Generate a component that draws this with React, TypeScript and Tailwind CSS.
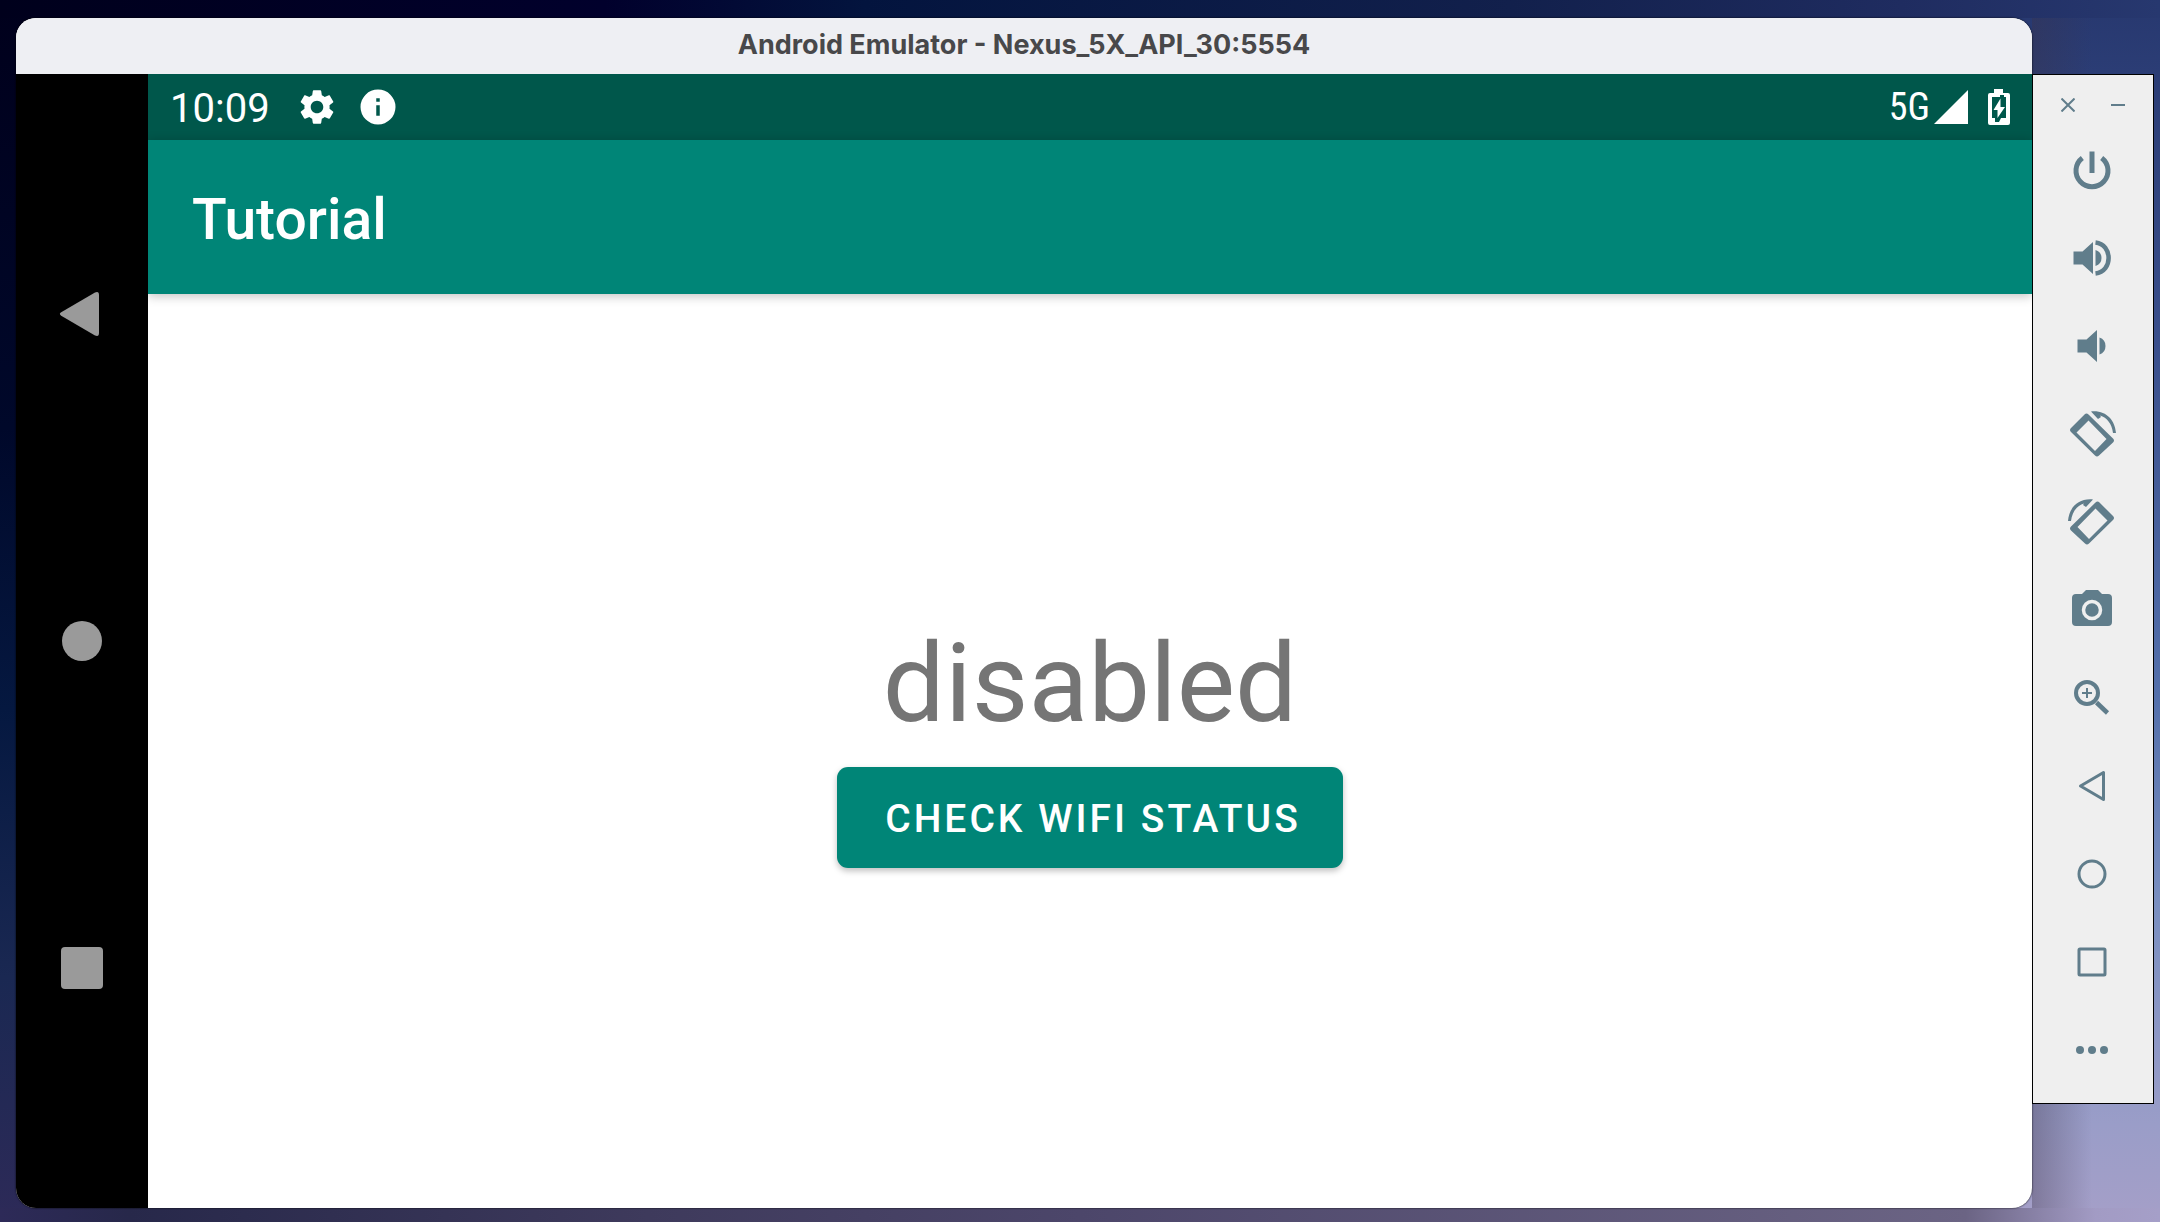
import type { ReactNode } from "react";

const navButton = "flex size-12 items-center justify-center text-[#9a9a9a]";
const toolButton = "flex h-[88px] w-full items-center justify-center pr-[2px]";

function Tool({ label, children }: { label: string; children: ReactNode }) {
  return (
    <button type="button" aria-label={label} className={toolButton}>
      <svg viewBox="0 0 48 48" className="size-12" fill="none" stroke="currentColor" aria-hidden="true">
        {children}
      </svg>
    </button>
  );
}

function RotatedPhone() {
  return (
    <>
      <path
        fill="currentColor"
        fillRule="evenodd"
        stroke="none"
        d="M3 18 16.500 4.500Q18.500 2.500 20.500 4.500L45 28.500Q47 30.500 45 32.500L31 45.500Q29 47.500 27 45.500L3 22Q1 20 3 18ZM8.500 22.500 27 41 38.500 29 20.500 10.500Z"
      />
      <path fill="currentColor" stroke="none" d="M23 1.500C38 0 47 10 48 23H45C44 14 39 7.500 32 5.500L33 7 30 9Z" />
    </>
  );
}

function NavigationBar() {
  return (
    <nav aria-label="Navigation" className="flex w-[132px] shrink-0 flex-col items-center justify-around bg-black py-[76px]">
      <button type="button" aria-label="Back" className={navButton}>
        <svg viewBox="0 0 48 48" className="size-12" fill="currentColor" aria-hidden="true">
          <path d="M3.200 22.300 37 2.500Q41 .800 41 5V43Q41 47.200 37 45.500L3.200 25.700Q.500 24 3.200 22.300Z" />
        </svg>
      </button>
      <button type="button" aria-label="Home" className={navButton}>
        <span className="size-10 rounded-full bg-[#9a9a9a]" />
      </button>
      <button type="button" aria-label="Overview" className={navButton}>
        <span className="size-[42px] rounded bg-[#9a9a9a]" />
      </button>
    </nav>
  );
}

function StatusBar() {
  return (
    <div className="flex h-[66px] items-center bg-[#00574b] pr-[22px] pl-[22px] text-white">
      <span className="pt-1 text-[40px] leading-none">10:09</span>
      <svg viewBox="0 0 24 24" className="ml-[26px] size-[42px]" fill="currentColor" aria-label="Settings">
        <path d="M19.140 12.940c.04-.3.06-.61.06-.94 0-.32-.02-.64-.07-.94l2.030-1.580c.18-.14.23-.41.12-.61l-1.920-3.320c-.12-.22-.37-.29-.59-.22l-2.390.96c-.5-.38-1.030-.7-1.620-.94l-.36-2.540c-.04-.24-.24-.41-.48-.41h-3.840c-.24 0-.43.17-.47.41l-.36 2.540c-.59.24-1.130.57-1.620.94l-2.390-.96c-.22-.08-.47 0-.59.22L2.740 8.870c-.12.21-.08.47.12.61l2.030 1.580c-.05.3-.09.63-.09.94s.02.64.07.94l-2.030 1.580c-.18.14-.23.41-.12.61l1.920 3.320c.12.22.37.29.59.22l2.390-.96c.5.38 1.030.7 1.620.94l.36 2.540c.05.24.24.41.48.41h3.840c.24 0 .44-.17.47-.41l.36-2.540c.59-.24 1.130-.56 1.620-.94l2.390.96c.22.08.47 0 .59-.22l1.920-3.320c.12-.22.07-.47-.12-.61l-2.010-1.580zM12 15.600c-1.980 0-3.600-1.620-3.600-3.600s1.620-3.600 3.600-3.600 3.600 1.620 3.600 3.600-1.620 3.600-3.600 3.600z" />
      </svg>
      <svg viewBox="0 0 24 24" className="ml-[19px] size-[42px]" fill="currentColor" aria-label="Information">
        <path d="M12 2a10 10 0 1 0 0 20 10 10 0 0 0 0-20Zm1 15h-2v-6h2v6Zm0-8h-2V7h2v2Z" />
      </svg>
      <span className="ml-auto font-['Roboto_Condensed',Roboto,sans-serif] text-[38px] leading-none">5G</span>
      <svg viewBox="0 0 34 34" className="ml-1 size-[34px]" fill="currentColor" aria-label="Signal">
        <path d="M34 0V34H0Z" />
      </svg>
      <svg viewBox="0 0 22 36" className="ml-5 h-9 w-[22px]" aria-label="Battery charging">
        <path fill="currentColor" d="M6 0h9v4h5q2 0 2 2v28q0 2-2 2H2q-2 0-2-2V6q0-2 2-2h4Z" />
        <path fill="#00574b" d="M4 8h8V6h4v2h2v21h-5l-2 4H7v-4H4Z" />
        <path fill="currentColor" d="M12.500 9.500v8.500H17L9.500 29v-8H5.500Z" />
      </svg>
    </div>
  );
}

function Toolbar() {
  return (
    <aside
      aria-label="Emulator controls"
      className="mt-14 flex w-[122px] shrink-0 flex-col self-start border border-black bg-[#efefef] pt-2 pb-[9px] text-[#607d8b]"
    >
      <div className="flex h-[43px] items-center justify-center gap-[22px]">
        <button type="button" aria-label="Close" className="flex size-7 items-center justify-center">
          <svg viewBox="0 0 14 14" className="size-[14px]" fill="none" stroke="currentColor" strokeWidth="2" aria-hidden="true">
            <path d="M.5.500 13.500 13.500M13.500.500.500 13.500" />
          </svg>
        </button>
        <button type="button" aria-label="Minimize" className="flex size-7 items-center justify-center">
          <span className="h-[2px] w-[14px] bg-[#607d8b]" />
        </button>
      </div>
      <Tool label="Power">
        <path strokeWidth="5" d="M24 5.500V27M14.300 12a16 16 0 1 0 19.400 0" />
      </Tool>
      <Tool label="Volume up">
        <path fill="currentColor" stroke="none" d="M5.500 17.500h9L25 8V40L14.500 30.500h-9ZM27.500 16q6 2 6 8t-6 8Z" />
        <path strokeWidth="4.500" d="M27.500 8.500C45 10.500 45 37.500 27.500 39.500" />
      </Tool>
      <Tool label="Volume down">
        <path fill="currentColor" stroke="none" d="M9.500 17.500h9L29 8V40L18.500 30.500h-9ZM31.500 15.500q6 2 6 8.500t-6 8.500Z" />
      </Tool>
      <Tool label="Rotate left">
        <RotatedPhone />
      </Tool>
      <Tool label="Rotate right">
        <g transform="translate(48 0) scale(-1 1)">
          <RotatedPhone />
        </g>
      </Tool>
      <Tool label="Take screenshot">
        <path fill="currentColor" stroke="none" d="M18 4H30L34 8H40Q44 8 44 12V36Q44 40 40 40H8Q4 40 4 36V12Q4 8 8 8H14Z" />
        <circle cx="24" cy="24" r="8.500" stroke="#efefef" strokeWidth="3.500" />
      </Tool>
      <Tool label="Zoom">
        <circle cx="19" cy="19" r="11" strokeWidth="4" />
        <path strokeWidth="2" d="M19 14V24M14 19H24" />
        <path strokeWidth="4.500" d="M28.500 28.500 39.500 39" />
      </Tool>
      <Tool label="Back">
        <path strokeWidth="3" strokeLinejoin="round" d="M12.500 24 35.500 10.500V37.500Z" />
      </Tool>
      <Tool label="Home">
        <circle cx="24" cy="24" r="13" strokeWidth="3" />
      </Tool>
      <Tool label="Overview">
        <rect x="11" y="11" width="26" height="26" rx="1" strokeWidth="3" />
      </Tool>
      <Tool label="More">
        <g fill="currentColor" stroke="none">
          <circle cx="12" cy="24" r="4" />
          <circle cx="24" cy="24" r="4" />
          <circle cx="36" cy="24" r="4" />
        </g>
      </Tool>
    </aside>
  );
}

export default function App() {
  return (
    <div className="flex min-h-screen bg-[linear-gradient(to_right,#00001c,#01002c_28%,#03143e_40%,#12204c_70%,#1f2c60_88%,#27386f),linear-gradient(to_right,#2d2a58,#27284a_6%,#3e3a5c_30%,#4c466a_50%,#6b6484_91%,#a29bc4_97%,#a59fc8),linear-gradient(to_right,transparent_20px,rgb(60_50_70/0.35)_20px,transparent_80px),linear-gradient(to_bottom,#27386f,#3a4f8c_28%,#5470ab_57%,#7a8fc0_74%,#9a9dc8_92%,#a59fc8),linear-gradient(to_bottom,#00001c,#00082a_35%,#051840_58%,#1a2852_80%,#2d2a58)] bg-[size:100%_18px,100%_14px,148px_100%,148px_100%,100%_100%] bg-[position:top,bottom,right,right,left] bg-no-repeat pt-[18px] pr-[6px] pb-[14px] pl-4 font-[Roboto,sans-serif]">
      <main className="flex min-w-0 flex-1 flex-col overflow-hidden rounded-[20px] bg-white shadow-[0_0_2px_#000000]">
        <header className="flex h-14 shrink-0 items-center justify-center bg-[#eeeff3] pb-[2px]">
          <h1 className="font-[Inter,sans-serif] text-[27px] font-bold text-[#48484a]">
            Android Emulator - Nexus_5X_API_30:5554
          </h1>
        </header>
        <div className="flex flex-1">
          <NavigationBar />
          <section className="flex min-w-0 flex-1 flex-col">
            <StatusBar />
            <div className="flex h-[154px] items-center bg-[#008577] px-11 pt-1 shadow-[0_2px_10px_rgb(0_0_0/0.25)]">
              <h2 className="text-[57px] leading-none font-medium text-white">Tutorial</h2>
            </div>
            <div className="flex flex-1 flex-col items-center justify-center pb-4">
              <p className="text-[110px] leading-[130px] text-[#757575]">disabled</p>
              <button
                type="button"
                className="mt-[18px] h-[101px] rounded-[11px] bg-[#008577] pt-1 pr-[42px] pl-12 text-[39px] font-medium tracking-[3px] text-white shadow-[0_3px_6px_rgb(0_0_0/0.25)]"
              >
                CHECK WIFI STATUS
              </button>
            </div>
          </section>
        </div>
      </main>
      <Toolbar />
    </div>
  );
}
